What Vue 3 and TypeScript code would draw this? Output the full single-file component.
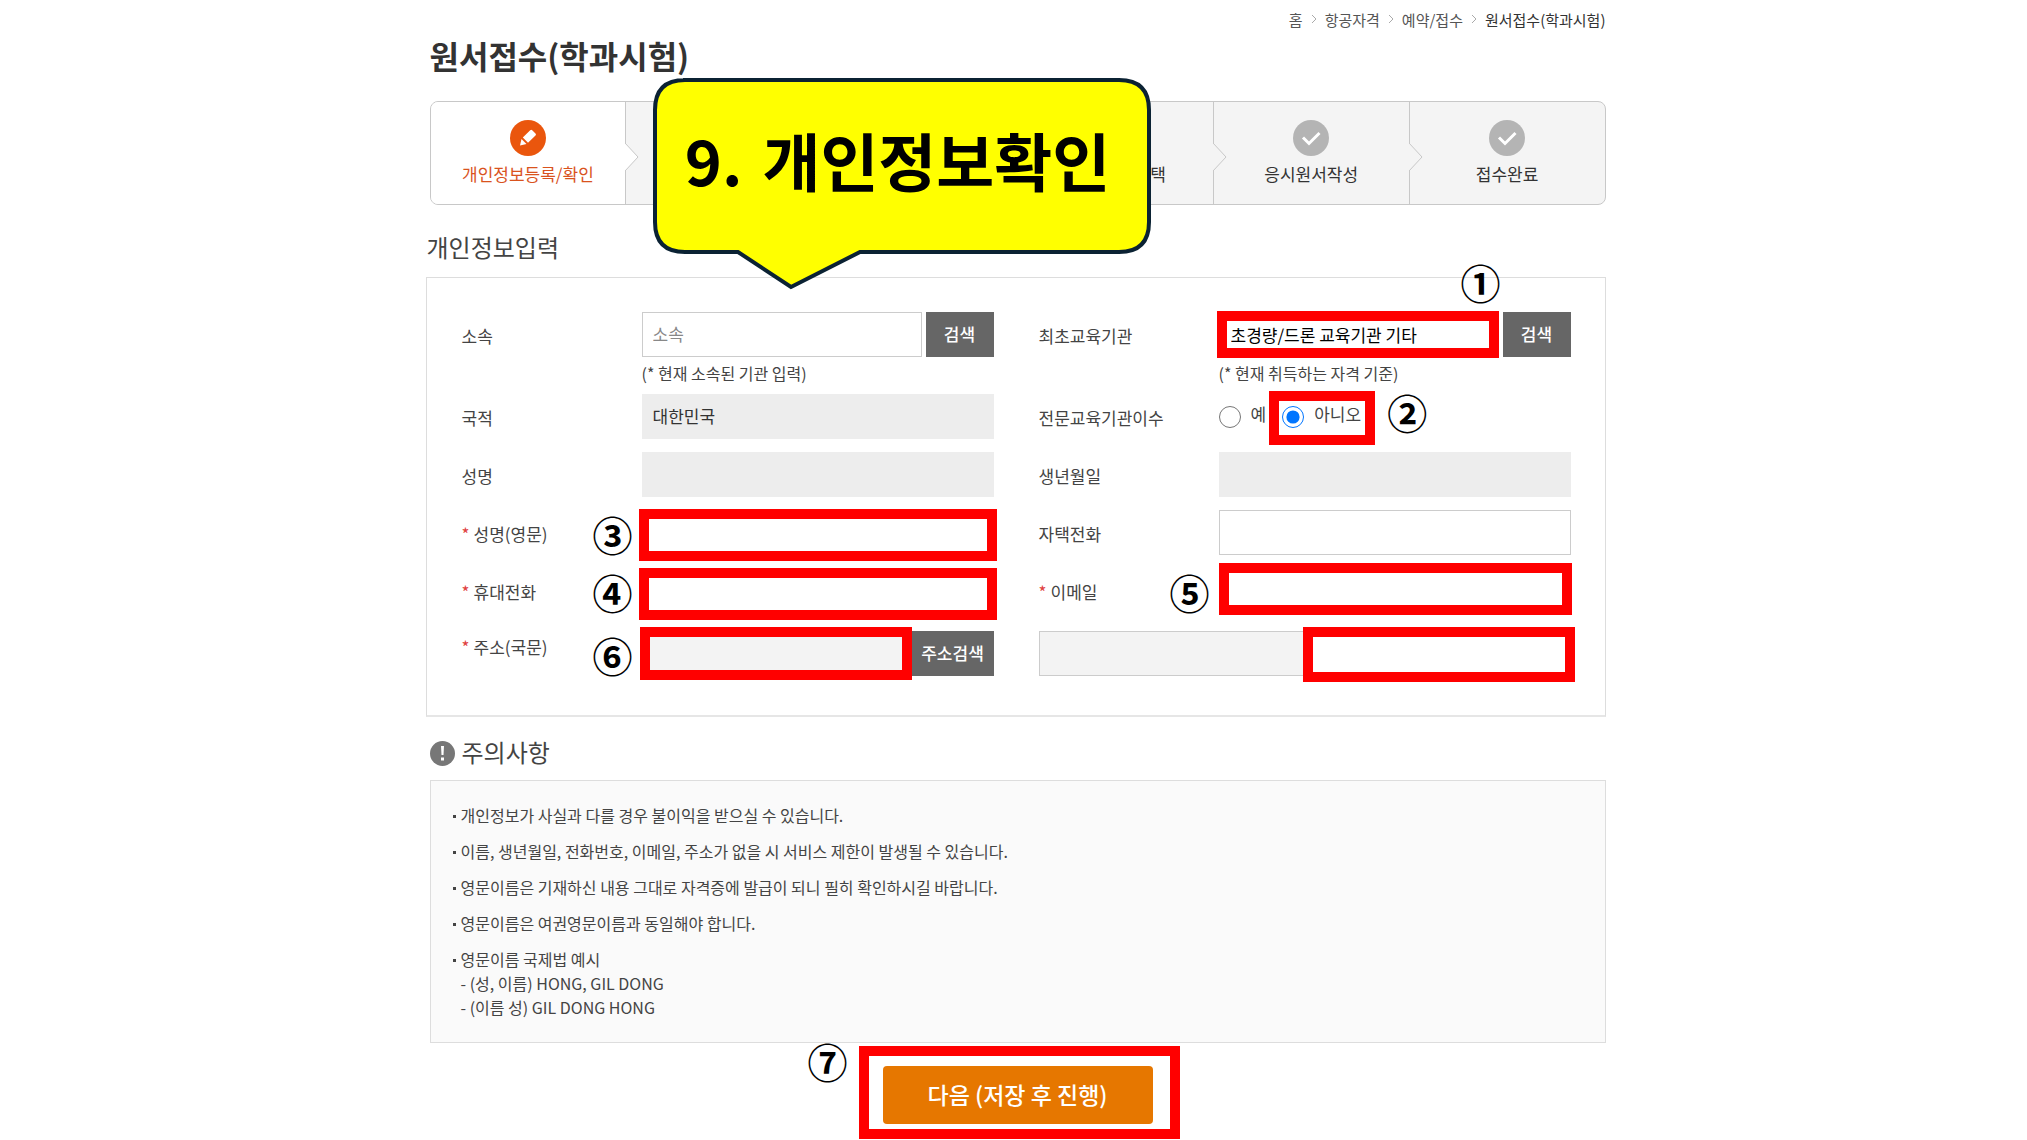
<script setup lang="ts">
import { ref } from 'vue'

interface Step {
  label: string
  active?: boolean
  tail?: boolean
}

const trail: string[] = ['홈', '항공자격', '예약/접수']

const steps: Step[] = [
  { label: '개인정보등록/확인', active: true },
  { label: '' },
  { label: '' },
  { label: '선택', tail: true },
  { label: '응시원서작성' },
  { label: '접수완료' },
]

const notices: string[] = [
  '개인정보가 사실과 다를 경우 불이익을 받으실 수 있습니다.',
  '이름, 생년월일, 전화번호, 이메일, 주소가 없을 시 서비스 제한이 발생될 수 있습니다.',
  '영문이름은 기재하신 내용 그대로 자격증에 발급이 되니 필히 확인하시길 바랍니다.',
  '영문이름은 여권영문이름과 동일해야 합니다.',
]

const examples: string[] = ['- (성, 이름) HONG, GIL DONG', '- (이름 성) GIL DONG HONG']

const organization = ref('')
const firstSchool = ref('초경량/드론 교육기관 기타')
const completed = ref('no')
const englishName = ref('')
const homePhone = ref('')
const mobile = ref('')
const email = ref('')
const addressDetail = ref('')
</script>

<template>
  <main class="page">
    <nav class="crumbs" aria-label="현재 위치">
      <template v-for="item in trail" :key="item">
        <a href="#">{{ item }}</a>
        <svg class="crumb-arrow" viewBox="0 0 6 10" aria-hidden="true"><path d="M1 1l4 4-4 4" /></svg>
      </template>
      <a href="#" class="current">원서접수(학과시험)</a>
    </nav>

    <h1 class="title">원서접수(학과시험)</h1>

    <ol class="steps">
      <li v-for="(step, i) in steps" :key="i" class="step" :class="{ active: step.active, tail: step.tail }">
        <svg v-if="i > 0" class="notch" :class="{ light: i === 1 }" viewBox="0 0 15 28" aria-hidden="true">
          <path d="M0 0L13 14L0 28" />
        </svg>
        <svg class="step-icon" viewBox="0 0 36 36" aria-hidden="true">
          <circle cx="18" cy="18" r="18" />
          <g v-if="step.active" class="pencil">
            <path d="M10 25.500l1.500-6.500 5 5z" />
            <path d="M12.800 17.600L20.200 10.200q1-1 2 0L25.500 13.500q1 1 0 2L18 22.800z" />
          </g>
          <path v-else class="check" d="M10 17.500l6 6 10.500-10.500" />
        </svg>
        <span class="step-label">{{ step.label }}</span>
      </li>
    </ol>

    <h2 class="section-title">개인정보입력</h2>
    <form id="personal" class="panel" @submit.prevent>
      <div class="column">
        <div class="row">
          <label class="label" for="org">소속</label>
          <div class="field">
            <div class="search">
              <input id="org" v-model="organization" type="text" placeholder="소속" />
              <button type="button" class="dark">검색</button>
            </div>
            <p class="hint">(* 현재 소속된 기관 입력)</p>
          </div>
        </div>
        <div class="row">
          <label class="label" for="nation">국적</label>
          <div class="field"><input id="nation" class="locked" type="text" value="대한민국" readonly /></div>
        </div>
        <div class="row">
          <label class="label" for="name">성명</label>
          <div class="field"><input id="name" class="locked" type="text" readonly /></div>
        </div>
        <div class="row">
          <label class="label" for="name-en"><i>*</i>성명(영문)</label>
          <div class="field">
            <input id="name-en" v-model="englishName" type="text" />
            <span class="frame frame-name"></span>
            <span class="mark mark-side">③</span>
          </div>
        </div>
        <div class="row">
          <label class="label" for="mobile"><i>*</i>휴대전화</label>
          <div class="field">
            <input id="mobile" v-model="mobile" type="text" />
            <span class="frame frame-mobile"></span>
            <span class="mark mark-side">④</span>
          </div>
        </div>
        <div class="row last">
          <label class="label" for="address"><i>*</i>주소(국문)</label>
          <div class="field search flush">
            <div class="cell">
              <input id="address" class="muted" type="text" readonly />
              <span class="frame frame-address"></span>
            </div>
            <button type="button" class="dark wide">주소검색</button>
            <span class="mark mark-side">⑥</span>
          </div>
        </div>
      </div>

      <div class="column">
        <div class="row">
          <label class="label" for="school">최초교육기관</label>
          <div class="field">
            <div class="search">
              <div class="cell">
                <input id="school" v-model="firstSchool" class="strong" type="text" />
                <span class="frame frame-school"></span>
                <span class="mark mark-school">①</span>
              </div>
              <button type="button" class="dark">검색</button>
            </div>
            <p class="hint">(* 현재 취득하는 자격 기준)</p>
          </div>
        </div>
        <div class="row">
          <span id="completed-label" class="label">전문교육기관이수</span>
          <div class="field radios" role="radiogroup" aria-labelledby="completed-label">
            <label class="radio">
              <input v-model="completed" type="radio" name="completed" value="yes" />
              <span class="radio-text">예</span>
            </label>
            <label class="radio">
              <input v-model="completed" type="radio" name="completed" value="no" />
              <span class="radio-text">아니오</span>
              <span class="frame frame-radio"></span>
              <span class="mark mark-radio">②</span>
            </label>
          </div>
        </div>
        <div class="row">
          <label class="label" for="birth">생년월일</label>
          <div class="field"><input id="birth" class="locked" type="text" readonly /></div>
        </div>
        <div class="row">
          <label class="label" for="home">자택전화</label>
          <div class="field"><input id="home" v-model="homePhone" type="text" /></div>
        </div>
        <div class="row">
          <label class="label" for="email"><i>*</i>이메일</label>
          <div class="field">
            <input id="email" v-model="email" type="email" />
            <span class="frame frame-email"></span>
            <span class="mark mark-side">⑤</span>
          </div>
        </div>
        <div class="row last">
          <div class="cell"><input class="muted" type="text" aria-label="기본주소" readonly /></div>
          <div class="cell">
            <input v-model="addressDetail" type="text" aria-label="상세주소" />
            <span class="frame frame-detail"></span>
          </div>
        </div>
      </div>
    </form>

    <h2 class="section-title caution">
      <svg viewBox="0 0 25 25" aria-hidden="true">
        <circle cx="12.500" cy="12.500" r="12.500" />
        <path d="M11 5h3l-0.500 9h-2zM11 16.500h3v3h-3z" />
      </svg>
      <span>주의사항</span>
    </h2>
    <ul class="notices">
      <li v-for="notice in notices" :key="notice">{{ notice }}</li>
      <li>
        영문이름 국제법 예시
        <p v-for="line in examples" :key="line">{{ line }}</p>
      </li>
    </ul>

    <div class="actions">
      <div class="submit">
        <button type="submit" form="personal">다음 (저장 후 진행)</button>
        <span class="frame frame-submit"></span>
        <span class="mark mark-submit">⑦</span>
      </div>
    </div>

    <div class="callout">
      <svg viewBox="0 0 498 214" aria-hidden="true">
        <path d="M30 2H466Q496 2 496 32V144Q496 174 466 174H207L138 209L85 174H32Q2 174 2 144V32Q2 2 32 2Z" />
      </svg>
      <strong><span>9.</span> <span>개인정보확인</span></strong>
    </div>
  </main>
</template>

<style>
body {
  margin: 0;
  background: #fff;
}
</style>

<style scoped>
* {
  box-sizing: border-box;
}

.page {
  position: relative;
  max-width: 1180px;
  margin: 0 auto;
  left: 2px;
  padding-bottom: 16px;
  font-family: 'Noto Sans CJK KR', 'Noto Sans', sans-serif;
  font-size: 17px;
  color: #444;
}

input,
button {
  font: inherit;
}

.crumbs {
  display: flex;
  justify-content: flex-end;
  align-items: center;
  gap: 8px;
  height: 38px;
  font-size: 15px;
}

.crumbs a {
  color: #555;
  text-decoration: none;
}

.crumbs .current {
  color: #333;
}

.crumb-arrow {
  width: 6px;
  height: 10px;
  fill: none;
  stroke: #aaa;
}

.title {
  margin: 0 0 29px 4px;
  font-size: 32px;
  line-height: 34px;
  color: #333;
}

.steps {
  display: flex;
  height: 104px;
  margin: 0 0 25px 4px;
  padding: 0;
  list-style: none;
  overflow: hidden;
  border: 1px solid #c8c8c8;
  border-radius: 8px;
  background: #f4f4f4;
}

.step {
  position: relative;
  flex: 1;
  display: flex;
  flex-direction: column;
  align-items: center;
  gap: 5px;
  padding-top: 18px;
  color: #333;
}

.step + .step {
  border-left: 1px solid #c8c8c8;
}

.step.active {
  background: #fff;
  color: #d9531e;
}

.step-icon {
  width: 36px;
  height: 36px;
  fill: #b4b4b4;
}

.active .step-icon {
  fill: #ea560d;
}

.pencil {
  fill: #fff;
}

.check {
  fill: none;
  stroke: #fff;
  stroke-width: 3;
}

.step-label {
  line-height: 26px;
  white-space: nowrap;
}

.tail .step-label {
  align-self: flex-end;
  margin-right: 47px;
}

.notch {
  position: absolute;
  left: -1px;
  top: 41px;
  width: 15px;
  height: 28px;
  fill: #f4f4f4;
  stroke: #c8c8c8;
}

.notch.light {
  fill: #fff;
}

.section-title {
  margin: 0 0 13px;
  padding-left: 1px;
  font-size: 24px;
  font-weight: 400;
  line-height: 34px;
}

.panel {
  display: grid;
  grid-template-columns: 1fr 1fr;
  gap: 45px;
  padding: 34px 34px 39px 35px;
  border: 1px solid #ddd;
  border-bottom: 2px solid #e6e6e6;
}

.column {
  display: flex;
  flex-direction: column;
  gap: 13px;
  min-width: 0;
}

.row {
  display: flex;
  min-height: 45px;
}

.row.last {
  margin-top: 5px;
}

.label {
  flex: 0 0 180px;
  line-height: 48px;
  height: 45px;
}

.last .label {
  line-height: 32px;
}

.label i {
  display: inline-block;
  width: 12px;
  font-style: normal;
  color: #e04040;
}

.field,
.cell {
  position: relative;
  flex: 1;
  min-width: 0;
}

.search {
  display: flex;
  gap: 4px;
}

.search.flush {
  gap: 0;
}

.search > input {
  flex: 1;
  min-width: 0;
}

input[type='text'],
input[type='email'] {
  display: block;
  width: 100%;
  height: 45px;
  padding: 0 10px 2px;
  border: 1px solid #ccc;
  border-radius: 0;
  background: #fff;
  color: #333;
  outline: none;
}

input::placeholder {
  color: #888;
}

input.locked {
  border-color: #ededed;
  background: #ededed;
}

input.muted {
  background: #f3f3f3;
}

input.strong {
  padding: 0 11px;
  color: #000;
}

.dark {
  flex: 0 0 68px;
  height: 45px;
  padding: 0 0 2px;
  border: 0;
  background: #666;
  color: #fff;
  font-size: 17px;
  font-weight: 500;
}

.dark.wide {
  flex-basis: 82px;
}

.hint {
  margin: 8px 0 0;
  font-size: 16px;
  line-height: 16px;
}

.radios {
  display: flex;
  gap: 16px;
}

.radio {
  position: relative;
  display: flex;
  align-items: center;
  gap: 10px;
  height: 43px;
}

.radio input {
  width: 22px;
  height: 22px;
  margin: 2px 0 0;
  accent-color: #0075ff;
}

.radio-text {
  padding-bottom: 4px;
}

.frame {
  position: absolute;
  border: 10px solid #f00;
  pointer-events: none;
}

.frame-name {
  inset: -1px -3px -6px -3px;
}

.frame-mobile {
  inset: 0 -3px -7px -3px;
}

.frame-address {
  inset: -4px 0 -4px -2px;
}

.frame-school {
  inset: -1px 0 -1px -2px;
}

.frame-email {
  inset: -5px -1px -2px 0;
}

.frame-detail {
  inset: -4px -4px -6px -2px;
}

.frame-radio {
  inset: -3px -14px -8px -13px;
}

.frame-submit {
  inset: -20px -27px -15px -24px;
}

.mark {
  position: absolute;
  font-size: 40px;
  font-weight: 700;
  line-height: 40px;
  color: #000;
}

.mark-side {
  left: -49px;
  top: 4px;
}

.mark-school {
  right: -2px;
  top: -50px;
}

.mark-radio {
  left: 105px;
  top: -2px;
}

.mark-submit {
  left: -75px;
  top: -25px;
}

.caution {
  display: flex;
  align-items: center;
  gap: 7px;
  height: 35px;
  margin: 19px 0 9px 4px;
  padding-left: 0;
}

.caution span {
  padding-bottom: 3px;
}

.caution svg {
  width: 25px;
  height: 25px;
  fill: #777;
}

.caution path {
  fill: #fff;
}

.notices {
  display: flex;
  flex-direction: column;
  gap: 12px;
  margin: 0 0 23px 4px;
  padding: 22px 22px 23px;
  list-style: none;
  border: 1px solid #ddd;
  background: #fafafa;
  font-size: 16px;
  line-height: 24px;
}

.notices li {
  position: relative;
  padding-left: 8px;
}

.notices li::before {
  content: '';
  position: absolute;
  left: 0;
  top: 12px;
  width: 3px;
  height: 3px;
  background: #444;
}

.notices p {
  margin: 0;
}

.actions {
  display: flex;
  justify-content: center;
  margin-left: 4px;
}

.submit {
  position: relative;
}

.submit button {
  display: block;
  width: 270px;
  height: 58px;
  padding: 0 0 2px;
  border: 0;
  border-radius: 4px;
  background: #e67700;
  color: #fff;
  font-size: 23px;
  font-weight: 500;
}

.callout {
  position: absolute;
  left: 227px;
  top: 78px;
  width: 498px;
  height: 176px;
  display: flex;
  justify-content: center;
  padding-right: 8px;
}

.callout svg {
  position: absolute;
  left: 0;
  top: 0;
  width: 498px;
  height: 214px;
  fill: #ff0;
  stroke: #0b2233;
  stroke-width: 4;
}

.callout strong {
  position: relative;
  display: flex;
  gap: 20px;
  font-size: 63px;
  line-height: 162px;
  color: #000;
  white-space: nowrap;
}
</style>
